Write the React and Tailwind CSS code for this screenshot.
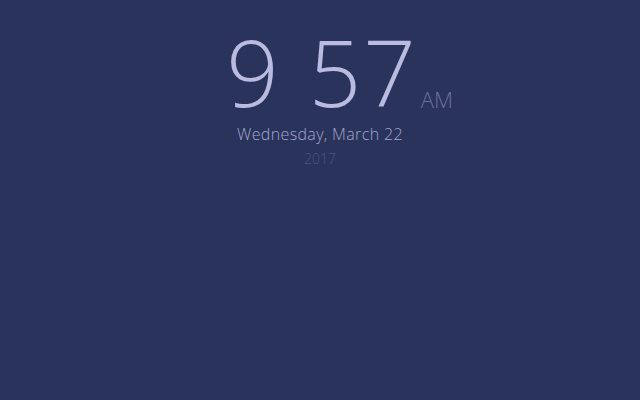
import React from 'react';

const App = () => {
    return (
        <div className="w-[640px] h-[400px] bg-[#2a335b] flex flex-col items-center" style={{ fontFamily: '"Open Sans", "Liberation Sans", sans-serif' }}>
            <div className="relative flex mt-[32px] ml-[4px] text-[92px] leading-[80px] font-light text-[#b9bbe0] tracking-[2px]">
                <span>9</span>
                <span className="w-[28px]"></span>
                <span>57</span>
                <span className="absolute left-full bottom-[1px] ml-[3px] text-[22px] leading-[24px] text-[#6a7099] tracking-normal">AM</span>
            </div>
            <div className="mt-[11px] text-[16px] leading-[22px] font-light text-[#a3a6d0] tracking-[0.35px]">
                Wednesday, March 22
            </div>
            <div className="mt-[5px] text-[14px] leading-[18px] font-light text-[#4b5382]">
                2017
            </div>
        </div>
    );
};

export default App;
